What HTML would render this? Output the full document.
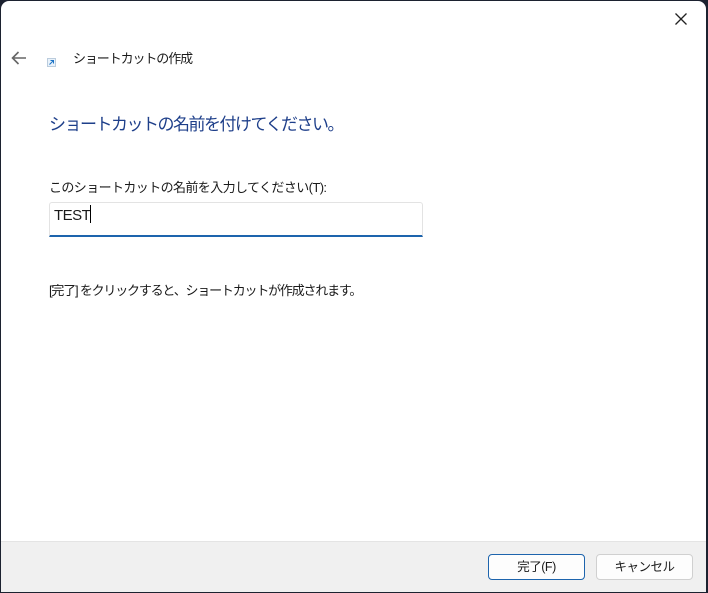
<!DOCTYPE html>
<html><head><meta charset="utf-8"><style>
html,body{margin:0;padding:0;width:708px;height:593px;overflow:hidden;background:#1c2230;}
*{box-sizing:border-box;}
body{font-family:"Liberation Sans","Noto Sans CJK JP",sans-serif;}
.win{position:absolute;left:1px;top:1px;width:705px;height:591px;background:#fff;border-radius:8px 8px 0 0;overflow:hidden;}
.foot{position:absolute;left:0;right:0;top:540px;bottom:0;background:#f0f0f0;border-top:1px solid #e4e4e4;}
.t{position:absolute;white-space:nowrap;color:#1a1a1a;}
.btn{position:absolute;top:553px;height:26px;border:1px solid #d0d0d0;border-radius:4px;background:#fdfdfd;font-size:12.5px;text-align:center;line-height:24px;color:#1a1a1a;letter-spacing:-0.5px;}
</style></head><body>
<div class="win">
<svg style="position:absolute;left:673px;top:11px" width="14" height="14" viewBox="0 0 14 14"><path d="M1.5 1.5L12.5 12.5M12.5 1.5L1.5 12.5" stroke="#222" stroke-width="1.3"/></svg>
<svg style="position:absolute;left:9px;top:49px" width="18" height="16" viewBox="0 0 18 16"><path d="M16 8H2.5M8.5 2L2.5 8L8.5 14" stroke="#666" stroke-width="1.6" fill="none"/></svg>
<svg style="position:absolute;left:46px;top:57px" width="9" height="9" viewBox="0 0 9 9"><rect x="0.5" y="0.5" width="8" height="8" fill="#e8f2fb" stroke="#bcd"/><path d="M2.5 6.5L6.5 2.5M3.5 2.5H6.5V5.5" stroke="#1a73c6" stroke-width="1" fill="none"/></svg>
<div class="t" style="left:72px;top:47px;font-size:13px;letter-spacing:-1.1px;">ショートカットの作成</div>
<div class="t" style="left:48px;top:109px;font-size:17px;color:#1e3f8a;letter-spacing:-1.5px;">ショートカットの名前を付けてください。</div>
<div class="t" style="left:48px;top:176px;font-size:13px;letter-spacing:-0.6px;">このショートカットの名前を入力してください(T):</div>
<div style="position:absolute;left:48px;top:201px;width:374px;height:35px;border:1px solid #e3e3e3;border-bottom:2px solid #1d64ad;border-radius:3px 3px 0 0;"></div>
<div class="t" style="left:53px;top:204px;font-size:15px;letter-spacing:-0.5px;">TEST<span style="display:inline-block;width:1px;height:18px;background:#000;vertical-align:-3px;"></span></div>
<div class="t" style="left:48px;top:279px;font-size:13px;letter-spacing:-1.2px;">[完了] をクリックすると、ショートカットが作成されます。</div>
<div class="foot"></div>
<div class="btn" style="left:487px;width:97px;border-color:#1d64ad;">完了(F)</div>
<div class="btn" style="left:595px;width:97px;">キャンセル</div>
</div>
</body></html>
